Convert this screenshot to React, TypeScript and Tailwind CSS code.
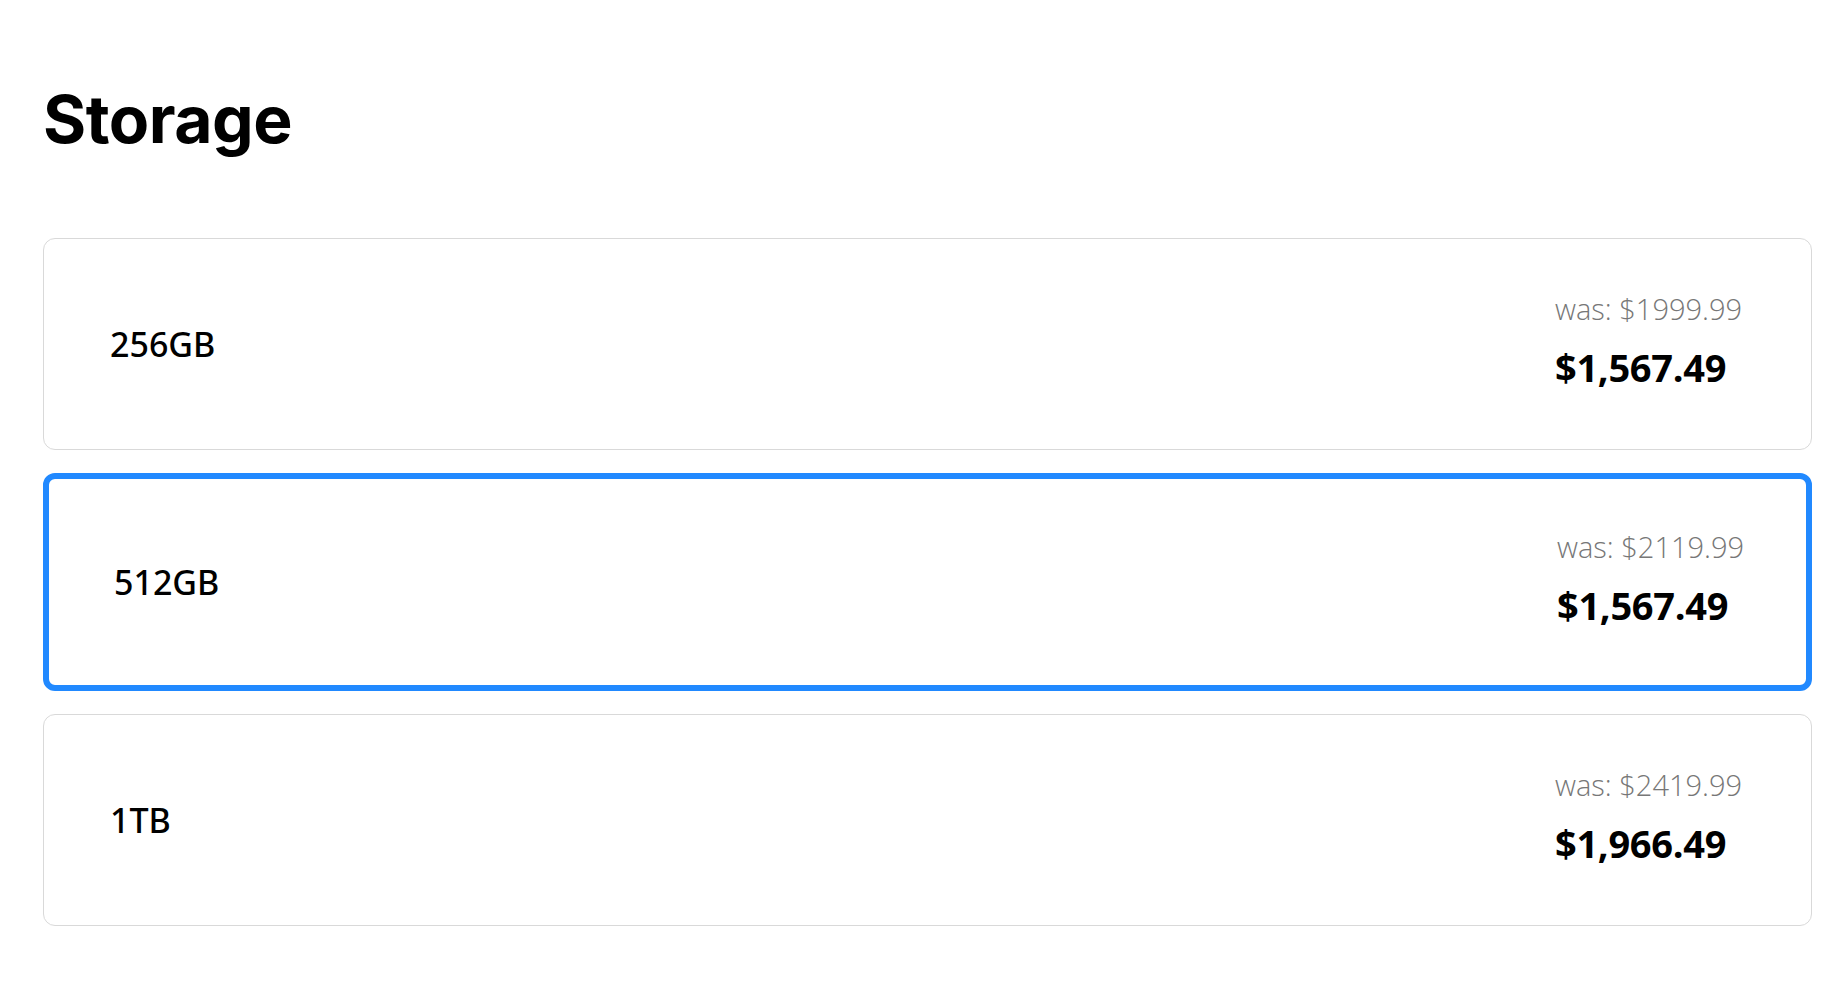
import React from "react";

const items = [
  { label: "256GB", was: "was: $1999.99", price: "$1,567.49", selected: false },
  { label: "512GB", was: "was: $2119.99", price: "$1,567.49", selected: true },
  { label: "1TB", was: "was: $2419.99", price: "$1,966.49", selected: false },
];

export default function App() {
  return (
    <div className="min-h-screen w-full bg-white pl-[43px] pr-[35px] pt-[86px]" style={{ fontFamily: '"Open Sans", "Noto Sans", sans-serif' }}>
      <h1
        className="text-[66px] font-bold leading-[1] tracking-[-0.5px] text-black"
        style={{ fontFamily: 'Inter, "Liberation Sans", sans-serif' }}
      >
        Storage
      </h1>
      <div className="mt-[86px] flex flex-col gap-[23px]">
        {items.map((it) => (
          <div
            key={it.label}
            className={
              it.selected
                ? "flex h-[218px] items-center justify-between rounded-[12px] border-[6px] border-[#2189ff] bg-white pl-[65px] pr-[59px]"
                : "flex h-[212px] items-center justify-between rounded-[12px] border border-[#d9d9d9] bg-white pl-[66px] pr-[66px]"
            }
          >
            <div
              className="text-[34px] font-medium leading-none text-black"
              style={{ fontFamily: '"Noto Sans", "Open Sans", sans-serif' }}
            >
              {it.label}
            </div>
            <div className="flex w-[190px] flex-col pb-[8px]">
              <div className="text-[29px] font-light leading-[36px] text-[#777]">{it.was}</div>
              <div className="mt-[18px] text-[38px] font-bold leading-[44px] tracking-[-0.3px] text-black">{it.price}</div>
            </div>
          </div>
        ))}
      </div>
    </div>
  );
}
